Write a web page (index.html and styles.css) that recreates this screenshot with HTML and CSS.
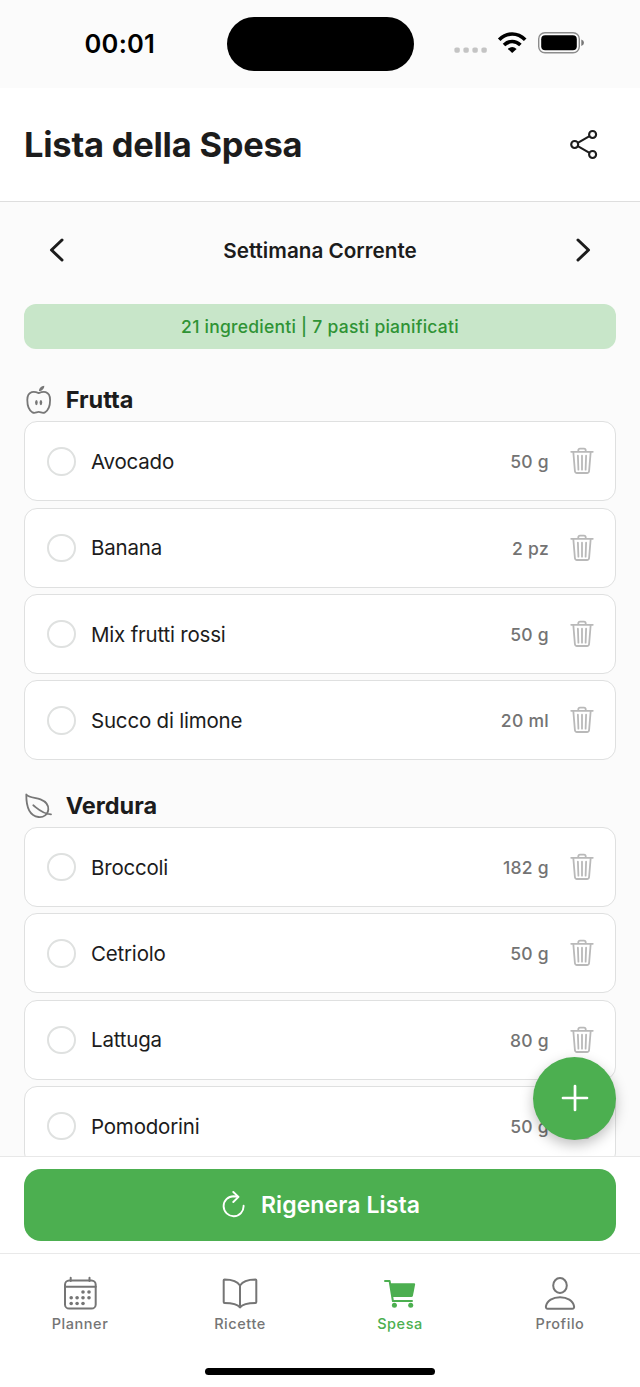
FILE: index.html
```html
<!DOCTYPE html>
<html lang="it">
<head>
<meta charset="utf-8">
<title>Lista della Spesa</title>
<link rel="stylesheet" href="styles.css">
</head>
<body>
<svg class="sprite" aria-hidden="true">
  <symbol id="trash" viewBox="0 0 24 28"><path d="M1.2 4.8H22.8M8.3 4.8V3.3Q8.3 1.7 10 1.7h4Q15.7 1.7 15.7 3.3V4.8M3.3 4.8 4.900 24Q5.1 26 7 26H17Q18.9 26 19.1 24L20.7 4.8M7.900 8.7 8.400 22.7M12 8.7V22.7M16.100 8.7 15.600 22.7"/></symbol>
</svg>
<div class="phone">
  <div class="status">
    <span class="time">00:01</span>
    <span class="island"></span>
    <svg class="signals" width="132" height="24" viewBox="453 31 132 24">
      <g fill="#c4c4c4"><rect x="454.4" y="47.4" width="5.4" height="5.4" rx="1.7"/><rect x="463.4" y="47.4" width="5.4" height="5.4" rx="1.7"/><rect x="472.4" y="47.4" width="5.4" height="5.4" rx="1.7"/><rect x="481.4" y="47.4" width="5.4" height="5.4" rx="1.7"/></g>
      <g fill="none" stroke="#000" stroke-width="3.7"><path d="M499.2 39.7Q505 34 512.2 34T525.2 39.7"/><path d="M504 45Q507.800 41.500 512.2 41.500T520.400 45"/></g>
      <path d="M507.800 48.900Q512.200 45.300 516.600 48.900L512.200 53Z"/>
      <rect x="538.700" y="32.700" width="40.600" height="20" rx="6.200" fill="none" stroke="#8c8c8c" stroke-width="1.400"/>
      <rect x="541.200" y="35.200" width="35.600" height="15" rx="4"/>
      <path d="M581.300 39.500Q584 40.500 584 42.700T581.300 46Z" fill="#777"/>
    </svg>
  </div>
  <header class="header">
    <h1>Lista della Spesa</h1>
    <svg class="share" width="30" height="32" viewBox="568.700 128.800 30 32"><circle cx="574.400" cy="144.300" r="3.500"/><circle cx="592.300" cy="134.300" r="3.500"/><circle cx="592.300" cy="154.300" r="3.500"/><path d="M577.500 142.600 589.200 136M577.500 146 589.200 152.600"/></svg>
  </header>
  <main class="content">
    <div class="week">
      <svg class="chevron" width="16" height="26" viewBox="0 0 16 26"><path d="M13 3 2.500 13 13 23"/></svg>
      <span class="week-label">Settimana Corrente</span>
      <svg class="chevron" width="16" height="26" viewBox="0 0 16 26"><path d="M3 3 13.500 13 3 23"/></svg>
    </div>
    <div class="summary"><span>21 ingredienti | 7 pasti pianificati</span></div>
    <section>
      <h2><svg class="cat" width="28" height="30" viewBox="0 0 28 30"><path d="M13.700 8.100C11.500 7.200 9 6.500 6.700 7.200 3.600 8.200 2.300 11 2.300 15 2.300 20.500 4.300 25.500 7.500 27.400 10 28.800 11.500 26.900 13.700 26.900S17.400 28.800 19.900 27.400C23.100 25.500 25.100 20.500 25.100 15 25.100 11 23.800 8.200 20.700 7.200 18.400 6.500 15.900 7.200 13.700 8.100Z"/><path class="solid" d="M13.900 6C14 3 15.900 1 19.300.7 19.300 4 17 5.900 13.900 6Z"/><ellipse class="solid" cx="11.400" cy="17.600" rx="1.300" ry="2.600"/><ellipse class="solid" cx="15.900" cy="17.600" rx="1.300" ry="2.600"/></svg><span>Frutta</span></h2>
      <ul>
        <li><i></i><span class="name">Avocado</span><span class="qty">50 g</span><svg class="trash"><use href="#trash"/></svg></li>
        <li><i></i><span class="name">Banana</span><span class="qty">2 pz</span><svg class="trash"><use href="#trash"/></svg></li>
        <li><i></i><span class="name">Mix frutti rossi</span><span class="qty">50 g</span><svg class="trash"><use href="#trash"/></svg></li>
        <li><i></i><span class="name">Succo di limone</span><span class="qty">20 ml</span><svg class="trash"><use href="#trash"/></svg></li>
      </ul>
    </section>
    <section>
      <h2><svg class="cat" width="28" height="30" viewBox="0 -2 28 30"><path d="M1.300 1.500C4.500 5.400 10.500 4.300 15.500 6.300 20.500 8.300 23.600 12 23.300 16.500 23 21.500 18.500 24.600 13.500 24 5 23 1.200 15 1.300 1.500ZM8.300 12.300C12.500 15.500 17.500 21 26 21.300"/></svg><span>Verdura</span></h2>
      <ul>
        <li><i></i><span class="name">Broccoli</span><span class="qty">182 g</span><svg class="trash"><use href="#trash"/></svg></li>
        <li><i></i><span class="name">Cetriolo</span><span class="qty">50 g</span><svg class="trash"><use href="#trash"/></svg></li>
        <li><i></i><span class="name">Lattuga</span><span class="qty">80 g</span><svg class="trash"><use href="#trash"/></svg></li>
        <li><i></i><span class="name">Pomodorini</span><span class="qty">50 g</span><svg class="trash"><use href="#trash"/></svg></li>
      </ul>
    </section>
  </main>
  <button class="fab" aria-label="Aggiungi"><svg width="28" height="28" viewBox="0 0 28 28"><path d="M14 2V26M2 14H26"/></svg></button>
  <div class="action">
    <button class="regen">
      <svg width="30" height="28" viewBox="220 1192.500 30 28"><path d="M243.600 1207.300A10 10 0 1 1 233.600 1197.700L238 1198.300M233.300 1193.500 238.500 1198.400 233.300 1203.500"/></svg>
      <span>Rigenera Lista</span>
    </button>
  </div>
  <nav class="tabs">
    <div class="tab"><svg width="36" height="36" viewBox="62 1276 36 36"><rect x="65" y="1280.600" width="30.700" height="28" rx="4.200"/><path d="M65 1286.800H95.700M70.700 1277.800V1281M89.500 1277.800V1281"/><g class="solid"><circle cx="83" cy="1292" r="1.800"/><circle cx="89" cy="1292" r="1.800"/><circle cx="71.200" cy="1297.700" r="1.800"/><circle cx="77.100" cy="1297.700" r="1.800"/><circle cx="83" cy="1297.700" r="1.800"/><circle cx="89" cy="1297.700" r="1.800"/><circle cx="71.200" cy="1303.500" r="1.800"/><circle cx="77.100" cy="1303.500" r="1.800"/><circle cx="83" cy="1303.500" r="1.800"/></g></svg><span>Planner</span></div>
    <div class="tab"><svg width="36" height="36" viewBox="222.500 1276 36 36"><path d="M240.500 1285.500C238 1281 232 1279.400 225 1279.400Q224.200 1279.400 224.200 1280.200V1302Q224.200 1303 225 1303C232 1303 237.500 1303.500 240.500 1307.500 243.500 1303.500 249 1303 256 1303Q256.800 1303 256.800 1302V1280.200Q256.800 1279.400 256 1279.400C249 1279.400 243 1281 240.500 1285.500ZM240.500 1285.500V1307"/></svg><span>Ricette</span></div>
    <div class="tab active"><svg width="36" height="36" viewBox="382 1276 36 36"><path d="M385 1280.900H389.600L392.900 1301H412"/><path class="solid" d="M390.300 1283.300H414Q415.300 1283.300 415.100 1284.600L413 1295.500Q412.700 1297 411.200 1297H392.500Z"/><circle class="solid" cx="394.400" cy="1305.300" r="2.500"/><circle class="solid" cx="410.700" cy="1305.300" r="2.500"/></svg><span>Spesa</span></div>
    <div class="tab"><svg width="36" height="36" viewBox="542.400 1276 36 36"><ellipse cx="560.400" cy="1285.500" rx="6.800" ry="7.400"/><path d="M548.200 1308.700H572.600C574 1308.700 574.700 1307.800 574.500 1306.500 573.500 1300.500 567.500 1297.200 560.400 1297.200S547.300 1300.500 546.300 1306.500C546.100 1307.800 546.800 1308.700 548.200 1308.700Z"/></svg><span>Profilo</span></div>
  </nav>
  <div class="home"><span></span></div>
</div>
</body>
</html>
```
FILE: styles.css
```css
* { box-sizing: border-box; }
body { margin: 0; font-family: Inter, "Liberation Sans", sans-serif; font-variant-ligatures: none; color: #1c1c1c; background: #fbfbfb; }
h1, h2, ul { margin: 0; padding: 0; }
button { border: 0; padding: 0; font: inherit; }
.sprite { display: none; }
.phone { width: 640px; height: 1387px; display: flex; flex-direction: column; overflow: hidden; position: relative; }

.status { height: 88px; flex: none; display: grid; grid-template-columns: 226.5px 187px 1fr; padding-top: 16.500px; color: #000; }
.time { font-size: 25.500px; font-weight: 600; font-variant-ligatures: normal; line-height: 54px; padding-left: 84.500px; letter-spacing: .25px; white-space: nowrap; }
.island { height: 54.500px; border-radius: 28px; background: #000; }
.signals { margin: 14.500px 0 0 39.500px; }

.header { height: 114px; flex: none; background: #fff; border-bottom: 1.600px solid #dedede; display: flex; justify-content: space-between; align-items: center; padding: 0 41.300px 0 24px; }
h1 { font-size: 34.500px; font-weight: 700; letter-spacing: -.25px; white-space: nowrap; }
.share { fill: none; stroke: #1c1c1c; stroke-width: 2.100; }

.content { flex: 1; min-height: 0; overflow: hidden; padding: 0 24px; }
.week { height: 102px; padding: 0 25px 6px; display: flex; justify-content: space-between; align-items: center; }
.week-label { font-size: 20.700px; font-weight: 600; white-space: nowrap; }
.chevron { fill: none; stroke: #1c1c1c; stroke-width: 3; stroke-linecap: round; stroke-linejoin: round; }
.summary { height: 44.500px; border-radius: 12px; background: #c8e6c9; color: #2f9335; font-size: 17.500px; font-weight: 500; letter-spacing: .25px; display: flex; align-items: center; justify-content: center; white-space: nowrap; }

section { padding-top: 25.500px; }
.summary + section { padding-top: 31.700px; }
h2 { height: 41.300px; display: flex; align-items: center; gap: 12.700px; padding: 0 0 2px 1px; font-size: 23.500px; font-weight: 700; }
.cat { fill: none; stroke: #777; stroke-width: 1.800; stroke-linecap: round; stroke-linejoin: round; }
.cat .solid { fill: #777; stroke: none; }
ul { list-style: none; display: flex; flex-direction: column; gap: 6.300px; }
li { height: 80px; border: 1.500px solid #dfe0e0; border-radius: 13px; background: #fff; display: flex; align-items: center; padding: 0 21px 0 22px; }
li i { width: 28.500px; height: 28.500px; border: 2px solid #dfe1e0; border-radius: 50%; }
.name { flex: 1; margin-left: 15.500px; font-size: 20.500px; letter-spacing: -.2px; }
.qty { padding-top: 1px; font-size: 17.500px; font-weight: 500; color: #737373; letter-spacing: .3px; }
.trash { width: 24px; height: 28px; margin-left: 21px; fill: none; stroke: #b9b9b9; stroke-width: 1.800; stroke-linejoin: round; stroke-linecap: round; }

.fab { position: absolute; left: 533px; top: 1056.500px; width: 83px; height: 83px; border-radius: 50%; background: #4caf50; box-shadow: 0 5px 13px rgba(0,0,0,.25); display: flex; align-items: center; justify-content: center; }
.fab svg { fill: none; stroke: #fff; stroke-width: 2.700; stroke-linecap: round; }

.action { flex: none; height: 97px; background: #fff; border-top: 1px solid #e8e8e8; padding: 12px 24px; position: relative; }
.regen { width: 100%; height: 72px; border-radius: 17px; background: #4caf50; color: #fff; display: flex; align-items: center; justify-content: center; gap: 11px; font-size: 23px; font-weight: 600; letter-spacing: .1px; }
.regen svg { fill: none; stroke: #fff; stroke-width: 1.900; stroke-linecap: round; stroke-linejoin: round; }

.tabs { flex: none; height: 95px; background: #fff; border-top: 1.300px solid #e9e9e9; display: grid; grid-template-columns: repeat(4, 1fr); }
.tab { display: flex; flex-direction: column; align-items: center; padding-top: 22px; color: #757575; font-size: 14.500px; font-weight: 500; letter-spacing: .55px; }
.tab svg { fill: none; stroke: currentColor; stroke-width: 2; stroke-linecap: round; stroke-linejoin: round; }
.tab .solid { fill: currentColor; stroke: none; }
.tab span { line-height: 18px; margin-top: 3px; }
.tab.active { color: #4caf50; }
.home { flex: none; height: 39px; background: #fff; display: flex; justify-content: center; align-items: flex-start; padding-top: 19.500px; }
.home span { width: 230px; height: 7.500px; border-radius: 4px; background: #000; }
```
